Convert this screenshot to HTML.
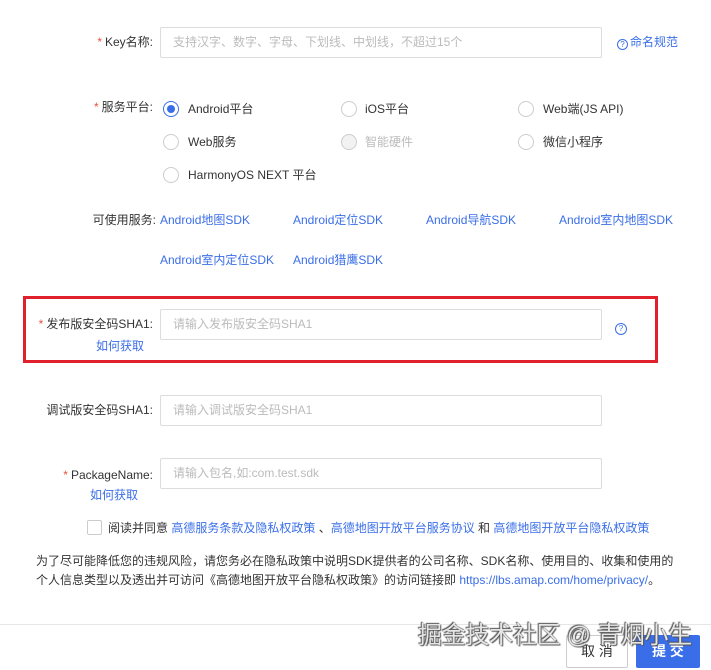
<!DOCTYPE html>
<html><head><meta charset="utf-8"><style>
*{margin:0;padding:0;box-sizing:border-box}
body{width:711px;height:670px;background:#fff;position:relative;overflow:hidden;font-family:"Liberation Sans","Noto Sans CJK SC",sans-serif;font-size:12px;color:#333}
.a{position:absolute;white-space:nowrap;line-height:16px}
.r{text-align:right}
.st{color:#e5533c;margin-right:3px}
.in{position:absolute;left:160px;width:442px;height:31px;border:1px solid #dcdcdc;border-radius:2px;color:#bbb;padding-left:12px;line-height:29px}
.bl{color:#3a6ee8}
.rd{position:absolute;width:16px;height:16px;border:1px solid #ccc;border-radius:50%;background:#fff}
.q{display:inline-block;width:11px;height:11px;border:1px solid #3a6ee8;border-radius:50%;font-size:8px;line-height:9px;text-align:center;color:#3a6ee8;vertical-align:-1px;margin-right:2px}
</style></head><body>
<div class="a r" style="right:558px;top:34px"><span class="st">*</span>Key名称:</div>
<div class="in" style="top:27px">支持汉字、数字、字母、下划线、中划线，不超过15个</div>
<div class="a bl" style="left:617px;top:34px"><span class="q">?</span>命名规范</div>

<div class="a r" style="right:558px;top:99px"><span class="st">*</span>服务平台:</div>
<div class="rd" style="left:163px;top:101px;border-color:#3a6ee8"><div style="position:absolute;left:3px;top:3px;width:8px;height:8px;border-radius:50%;background:#3a6ee8"></div></div>
<div class="a" style="left:188px;top:101px">Android平台</div>
<div class="rd" style="left:341px;top:101px"></div><div class="a" style="left:365px;top:101px">iOS平台</div>
<div class="rd" style="left:518px;top:101px"></div><div class="a" style="left:543px;top:101px">Web端(JS API)</div>
<div class="rd" style="left:163px;top:134px"></div><div class="a" style="left:188px;top:134px">Web服务</div>
<div class="rd" style="left:341px;top:134px;background:#f2f2f2"></div><div class="a" style="left:365px;top:134px;color:#bbb">智能硬件</div>
<div class="rd" style="left:518px;top:134px"></div><div class="a" style="left:543px;top:134px">微信小程序</div>
<div class="rd" style="left:163px;top:167px"></div><div class="a" style="left:188px;top:167px">HarmonyOS NEXT 平台</div>

<div class="a r" style="right:555px;top:212px">可使用服务:</div>
<div class="a bl" style="left:160px;top:212px">Android地图SDK</div>
<div class="a bl" style="left:293px;top:212px">Android定位SDK</div>
<div class="a bl" style="left:426px;top:212px">Android导航SDK</div>
<div class="a bl" style="left:559px;top:212px">Android室内地图SDK</div>
<div class="a bl" style="left:160px;top:252px">Android室内定位SDK</div>
<div class="a bl" style="left:293px;top:252px">Android猎鹰SDK</div>

<div style="position:absolute;left:23px;top:296px;width:635px;height:67px;border:3px solid #e0202a"></div>
<div class="a r" style="right:558px;top:316px"><span class="st">*</span>发布版安全码SHA1:</div>
<div class="in" style="top:309px">请输入发布版安全码SHA1</div>
<div class="a bl" style="left:615px;top:318px"><span class="q" style="width:12px;height:12px">?</span></div>
<div class="a bl" style="left:96px;top:338px">如何获取</div>

<div class="a r" style="right:558px;top:402px">调试版安全码SHA1:</div>
<div class="in" style="top:395px">请输入调试版安全码SHA1</div>

<div class="a r" style="right:558px;top:467px"><span class="st">*</span>PackageName:</div>
<div class="in" style="top:458px">请输入包名,如:com.test.sdk</div>
<div class="a bl" style="left:90px;top:487px">如何获取</div>

<div style="position:absolute;left:87px;top:520px;width:15px;height:15px;border:1px solid #ccc;border-radius:2px"></div>
<div class="a" style="left:108px;top:520px">阅读并同意 <span class="bl">高德服务条款及隐私权政策</span> 、<span class="bl">高德地图开放平台服务协议</span> 和 <span class="bl">高德地图开放平台隐私权政策</span></div>
<div class="a" style="left:36px;top:553px">为了尽可能降低您的违规风险，请您务必在隐私政策中说明SDK提供者的公司名称、SDK名称、使用目的、收集和使用的</div>
<div class="a" style="left:36px;top:572px">个人信息类型以及透出并可访问《高德地图开放平台隐私权政策》的访问链接即 <span class="bl">https://lbs.amap.com/home/privacy/</span>。</div>

<div style="position:absolute;left:0;top:624px;width:711px;border-top:1px solid #e6e6e6"></div>
<div style="position:absolute;left:566px;top:635px;width:62px;height:33px;border:1px solid #ccc;border-radius:2px;text-align:center;line-height:31px;font-size:14px">取 消</div>
<div style="position:absolute;left:636px;top:635px;width:64px;height:33px;background:#3a6ee8;border-radius:2px;text-align:center;line-height:33px;font-size:14px;color:#fff;font-weight:bold">提 交</div>
<div class="a" style="left:418px;top:622px;font-size:24px;line-height:28px;letter-spacing:-0.3px;color:rgba(255,255,255,.85);text-shadow:0 0 1px #555,1px 1px 1px #555,-1px -1px 1px #555">掘金技术社区 @ 青烟小生</div>
</body></html>
